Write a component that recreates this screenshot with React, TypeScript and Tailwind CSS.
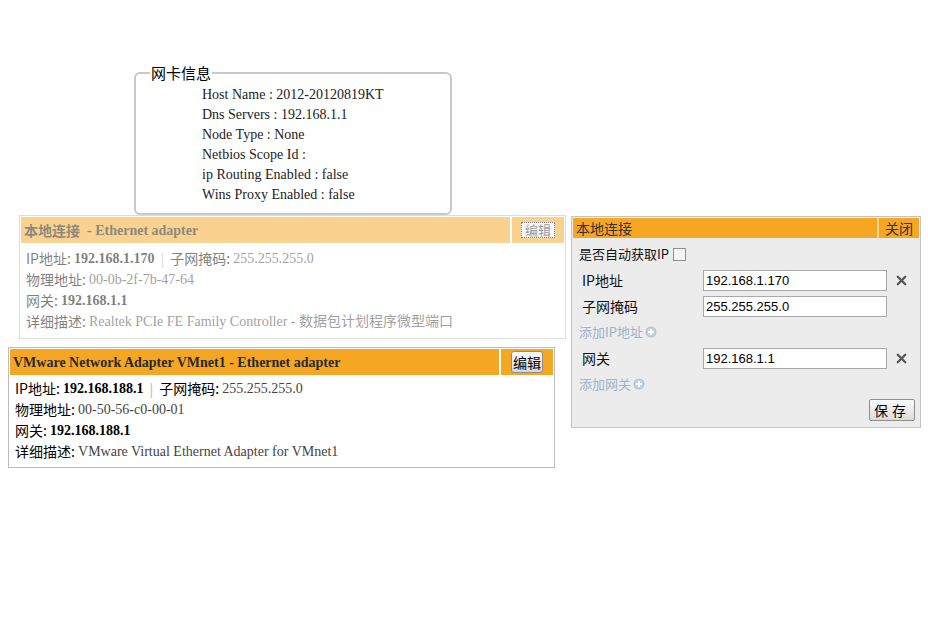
import { X } from "lucide-react";

const cjk = "font-['Noto_Sans_CJK_SC',sans-serif]";
const serif = "font-['Liberation_Serif','Noto_Sans_CJK_SC',serif]";

type AdapterProps = {
  name: string;
  kind: string;
  ip: string;
  mask: string;
  mac: string;
  gateway: string;
  desc: string;
  faded?: boolean;
  className?: string;
};

function AdapterPanel({ name, kind, ip, mask, mac, gateway, desc, faded, className }: AdapterProps) {
  const line = "flex h-[21px] items-center whitespace-pre";
  return (
    <div
      className={`w-[547px] border border-[#bcbcbc] bg-white p-px ${faded ? "opacity-50" : ""} ${className ?? ""}`}
    >
      <div className="flex h-[26px] gap-[2px]">
        <div
          className={`flex flex-1 items-center bg-[#f5a623] pl-[3px] text-[14px] font-bold ${faded ? "text-[#1c1000]" : "text-[#2a2a2a]"}`}
        >
          {faded ? (
            <>
              <span className={cjk}>{name}</span>
              <span className={`${serif} whitespace-pre`}>{"  " + kind}</span>
            </>
          ) : (
            <span className={serif}>{`${name} - ${kind}`}</span>
          )}
        </div>
        <div className="flex w-[52px] items-center justify-center bg-[#f5a623]">
          {faded ? (
            <button className={`${cjk} h-[16px] border border-dotted border-black bg-[#e9f2fb] px-[3px] text-[13px] leading-[14px] text-[#333]`}>
              编辑
            </button>
          ) : (
            <button
              className={`${cjk} h-[22px] w-[32px] rounded-[3px] border border-[#8e8e8e] bg-gradient-to-b from-[#fbfbfb] to-[#d6d6d6] text-[14px] leading-[20px] text-black`}
            >
              编辑
            </button>
          )}
        </div>
      </div>
      <div className={`px-[5px] ${faded ? "pb-[5px] pt-[5px]" : "pb-[4px] pt-[3px]"} text-[14px] text-black`}>
        <div className={line}>
          <span className={cjk}>IP地址: </span>
          <b className={serif}>{ip}</b>
          <span className="mx-[4px] text-[#bbb]">|</span>
          <span className={cjk}>子网掩码: </span>
          <span className={`${serif} text-[#444]`}>{mask}</span>
        </div>
        <div className={line}>
          <span className={cjk}>物理地址: </span>
          <span className={`${serif} text-[#444]`}>{mac}</span>
        </div>
        <div className={line}>
          <span className={cjk}>网关: </span>
          <b className={serif}>{gateway}</b>
        </div>
        <div className={line}>
          <span className={cjk}>详细描述: </span>
          <span className={`${serif} text-[#444]`}>{desc}</span>
        </div>
      </div>
    </div>
  );
}

function PlusCircle() {
  return (
    <svg width="12" height="12" viewBox="0 0 12 12" className="ml-[2px] inline-block">
      <circle cx="6" cy="6" r="5.5" fill="#b7c3cf" />
      <circle cx="6" cy="6" r="4.2" fill="#c9d3dc" />
      <path d="M6 3.2v5.6M3.2 6h5.6" stroke="#fff" strokeWidth="1.8" />
    </svg>
  );
}

function FieldRow({ label, value, removable }: { label: string; value: string; removable?: boolean }) {
  return (
    <div className="flex h-[26px] items-center">
      <span className={`${cjk} w-[130px] pl-[9px] text-[14px] text-[#111]`}>{label}</span>
      <input
        readOnly
        value={value}
        className="h-[21px] w-[184px] border border-[#a9a9a9] bg-white px-[2px] font-['Liberation_Sans',sans-serif] text-[13px] text-black outline-none"
      />
      {removable ? <X size={15} strokeWidth={3.6} className="ml-[7px] text-[#555]" /> : null}
    </div>
  );
}

function EditPanel() {
  return (
    <div className="h-[212px] w-[350px] border border-[#c4c4c4] bg-[#ececec] p-px">
      <div className="flex h-[20px] bg-[#f5a623] text-[14px] text-[#333]">
        <div className={`${cjk} flex flex-1 items-center pl-[3px]`}>本地连接</div>
        <div className={`${cjk} flex w-[42px] items-center justify-center border-l-2 border-[#fbd08a]`}>关闭</div>
      </div>
      <div className="flex h-[27px] items-center pl-[6px] pt-[5px] text-[13px] text-[#111]">
        <span className={cjk}>是否自动获取IP</span>
        <span className="ml-[4px] inline-block h-[13px] w-[13px] border border-[#8f8f8f] bg-[#f4f4f4]" />
      </div>
      <div className="mt-[2px]">
        <FieldRow label="IP地址" value="192.168.1.170" removable />
        <FieldRow label="子网掩码" value="255.255.255.0" />
      </div>
      <div className={`${cjk} flex h-[26px] items-center pl-[6px] text-[13px] text-[#9eb2c9]`}>
        添加IP地址
        <PlusCircle />
      </div>
      <FieldRow label="网关" value="192.168.1.1" removable />
      <div className={`${cjk} flex h-[26px] items-center pl-[6px] text-[13px] text-[#9eb2c9]`}>
        添加网关
        <PlusCircle />
      </div>
      <div className="mt-[2px] flex justify-end pr-[4px]">
        <button
          className={`${cjk} h-[22px] w-[46px] rounded-[2px] border border-[#8e8e8e] bg-gradient-to-b from-[#fbfbfb] to-[#dcdcdc] text-[14px] leading-[20px] tracking-[4px] text-black`}
        >
          保存
        </button>
      </div>
    </div>
  );
}

export default function App() {
  const hostInfo = [
    "Host Name : 2012-20120819KT",
    "Dns Servers : 192.168.1.1",
    "Node Type : None",
    "Netbios Scope Id :",
    "ip Routing Enabled : false",
    "Wins Proxy Enabled : false",
  ];

  return (
    <div className="h-[627px] w-[928px] overflow-hidden bg-white">
      <fieldset className="ml-[134px] mt-[64px] h-[151px] w-[318px] rounded-[6px] border-2 border-[#c8c8c8]">
        <legend className={`${cjk} ml-[14px] px-[1px] text-[15px] leading-[18px] text-black`}>网卡信息</legend>
        <div className={`${serif} pl-[66px] pt-[3px] text-[14px] leading-[20px] text-[#222]`}>
          {hostInfo.map((line) => (
            <div key={line}>{line}</div>
          ))}
        </div>
      </fieldset>

      <div className="flex items-start">
        <div className="w-[565px]">
          <AdapterPanel
            faded
            className="ml-[19px]"
            name="本地连接"
            kind="- Ethernet adapter"
            ip="192.168.1.170"
            mask="255.255.255.0"
            mac="00-0b-2f-7b-47-64"
            gateway="192.168.1.1"
            desc="Realtek PCIe FE Family Controller - 数据包计划程序微型端口"
          />
          <AdapterPanel
            className="ml-[8px] mt-[8px]"
            name="VMware Network Adapter VMnet1"
            kind="Ethernet adapter"
            ip="192.168.188.1"
            mask="255.255.255.0"
            mac="00-50-56-c0-00-01"
            gateway="192.168.188.1"
            desc="VMware Virtual Ethernet Adapter for VMnet1"
          />
        </div>
        <div className="ml-[6px] mt-[1px]">
          <EditPanel />
        </div>
      </div>
    </div>
  );
}
